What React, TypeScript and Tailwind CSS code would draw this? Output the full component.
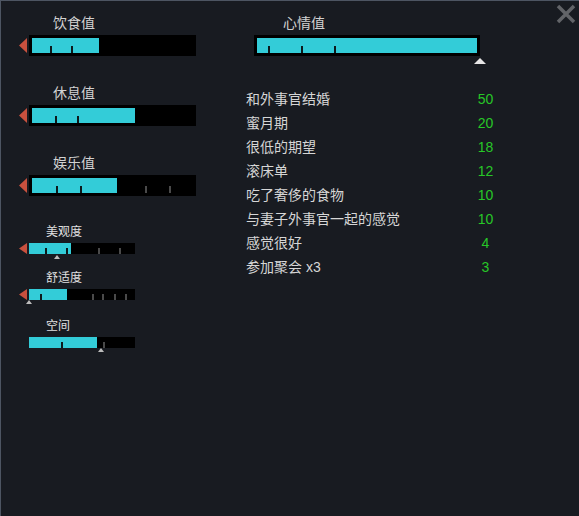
import React from 'react'

const cjk = { fontFamily: '"Liberation Sans", "Noto Sans CJK SC", sans-serif' }

interface Tick {
  x: number
  dark?: boolean
}

function LeftArrow({ h }: { h: number }) {
  return (
    <svg width="8" height={h} viewBox={`0 0 8 ${h}`} className="shrink-0">
      <polygon points={`8,0 0,${h / 2} 8,${h}`} fill="#c8503e" />
    </svg>
  )
}

function Marker({ left, top, color = '#bdbdbd', w = 6, h = 4 }: { left: number; top: number; color?: string; w?: number; h?: number }) {
  return (
    <svg width={w} height={h} viewBox={`0 0 ${w} ${h}`} className="absolute" style={{ left, top }}>
      <polygon points={`${w / 2},0 0,${h} ${w},${h}`} fill={color} />
    </svg>
  )
}

function BigBar({ width, fill, ticks }: { width: number; fill: number; ticks: Tick[] }) {
  return (
    <div className="h-[21px] bg-black p-[3px]" style={{ width }}>
      <div className="relative h-full w-full">
        <div className="h-full bg-[#33ccd8]" style={{ width: fill }} />
        {ticks.map((t, i) => (
          <div
            key={i}
            className={`absolute bottom-0 h-[7px] w-[2px] ${t.dark ? 'bg-[#0d1a1c]' : 'bg-[#4a4a4a]'}`}
            style={{ left: t.x }}
          />
        ))}
      </div>
    </div>
  )
}

function SmallBar({ fill, ticks, marker }: { fill: number; ticks: Tick[]; marker: { left: number; top: number } }) {
  return (
    <div className="relative h-[11px] w-[106px] bg-black">
      <div className="h-full bg-[#33ccd8]" style={{ width: fill }} />
      {ticks.map((t, i) => (
        <div
          key={i}
          className={`absolute bottom-0 h-[6px] w-[2px] ${t.dark ? 'bg-[#0d1a1c]' : 'bg-[#4a4a4a]'}`}
          style={{ left: t.x }}
        />
      ))}
      <Marker left={marker.left} top={marker.top} />
    </div>
  )
}

function BigStat({ label, fill, ticks, className }: { label: string; fill: number; ticks: Tick[]; className?: string }) {
  return (
    <div className={className}>
      <div className="h-[20px] pl-[34px] text-[14px] leading-[20px] text-[#d2d2d2]">{label}</div>
      <div className="mt-[2px] flex items-center gap-[2px]">
        <LeftArrow h={15} />
        <BigBar width={167} fill={fill} ticks={ticks} />
      </div>
    </div>
  )
}

function SmallStat({
  label,
  fill,
  ticks,
  marker,
  arrow = true,
  className,
}: {
  label: string
  fill: number
  ticks: Tick[]
  marker: { left: number; top: number }
  arrow?: boolean
  className?: string
}) {
  return (
    <div className={className}>
      <div className="h-[16px] pl-[27px] text-[12px] leading-[16px] text-[#e0e0e0]">{label}</div>
      <div className="mt-[3px] flex items-center gap-[2px]">
        {arrow ? <LeftArrow h={11} /> : <div className="w-[8px] shrink-0" />}
        <SmallBar fill={fill} ticks={ticks} marker={marker} />
      </div>
    </div>
  )
}

const thoughts = [
  { text: '和外事官结婚', value: 50 },
  { text: '蜜月期', value: 20 },
  { text: '很低的期望', value: 18 },
  { text: '滚床单', value: 12 },
  { text: '吃了奢侈的食物', value: 10 },
  { text: '与妻子外事官一起的感觉', value: 10 },
  { text: '感觉很好', value: 4 },
  { text: '参加聚会 x3', value: 3 },
]

export default function App() {
  return (
    <div
      className="relative flex h-[516px] w-[579px] overflow-hidden border-l border-t border-[#4d5562] bg-[#181b21]"
      style={cjk}
    >
      {/* close */}
      <svg width="20" height="20" viewBox="0 0 20 20" className="absolute right-[3px] top-[3px]">
        <path d="M2 2 L18 18 M18 2 L2 18" stroke="#626468" strokeWidth="3.5" />
      </svg>

      {/* needs column */}
      <div className="w-[245px] shrink-0 pl-[18px] pt-[12px]">
        <BigStat label="饮食值" fill={67} ticks={[{ x: 18, dark: true }, { x: 39, dark: true }]} />
        <BigStat
          className="mt-[27px]"
          label="休息值"
          fill={103}
          ticks={[{ x: 23, dark: true }, { x: 45, dark: true }]}
        />
        <BigStat
          className="mt-[27px]"
          label="娱乐值"
          fill={85}
          ticks={[{ x: 24, dark: true }, { x: 48, dark: true }, { x: 113 }, { x: 137 }]}
        />
        <SmallStat
          className="mt-[28px]"
          label="美观度"
          fill={42}
          ticks={[{ x: 16, dark: true }, { x: 37, dark: true }, { x: 69 }, { x: 90 }]}
          marker={{ left: 25, top: 12 }}
        />
        <SmallStat
          className="mt-[16px]"
          label="舒适度"
          fill={38}
          ticks={[{ x: 11, dark: true }, { x: 63 }, { x: 73 }, { x: 85 }, { x: 96 }]}
          marker={{ left: -3, top: 11 }}
        />
        <SmallStat
          className="mt-[18px]"
          label="空间"
          arrow={false}
          fill={68}
          ticks={[{ x: 32, dark: true }, { x: 74 }]}
          marker={{ left: 69, top: 11 }}
        />
      </div>

      {/* mood column */}
      <div className="pt-[12px]">
        <div className="h-[20px] pl-[37px] text-[14px] leading-[20px] text-[#d2d2d2]">心情值</div>
        <div className="relative ml-[8px] mt-[2px] w-[226px]">
          <BigBar width={226} fill={220} ticks={[{ x: 11, dark: true }, { x: 44, dark: true }, { x: 77, dark: true }]} />
          <Marker left={220} top={23} w={12} h={6} color="#e6e6e6" />
        </div>

        <div className="mt-[31px]">
          {thoughts.map((t, i) => (
            <div key={i} className="flex h-[24px] items-center text-[14px]">
              <div className="w-[225px] text-[#d6d6d6]">{t.text}</div>
              <div className="w-[29px] text-center text-[#27c727]">{t.value}</div>
            </div>
          ))}
        </div>
      </div>
    </div>
  )
}
